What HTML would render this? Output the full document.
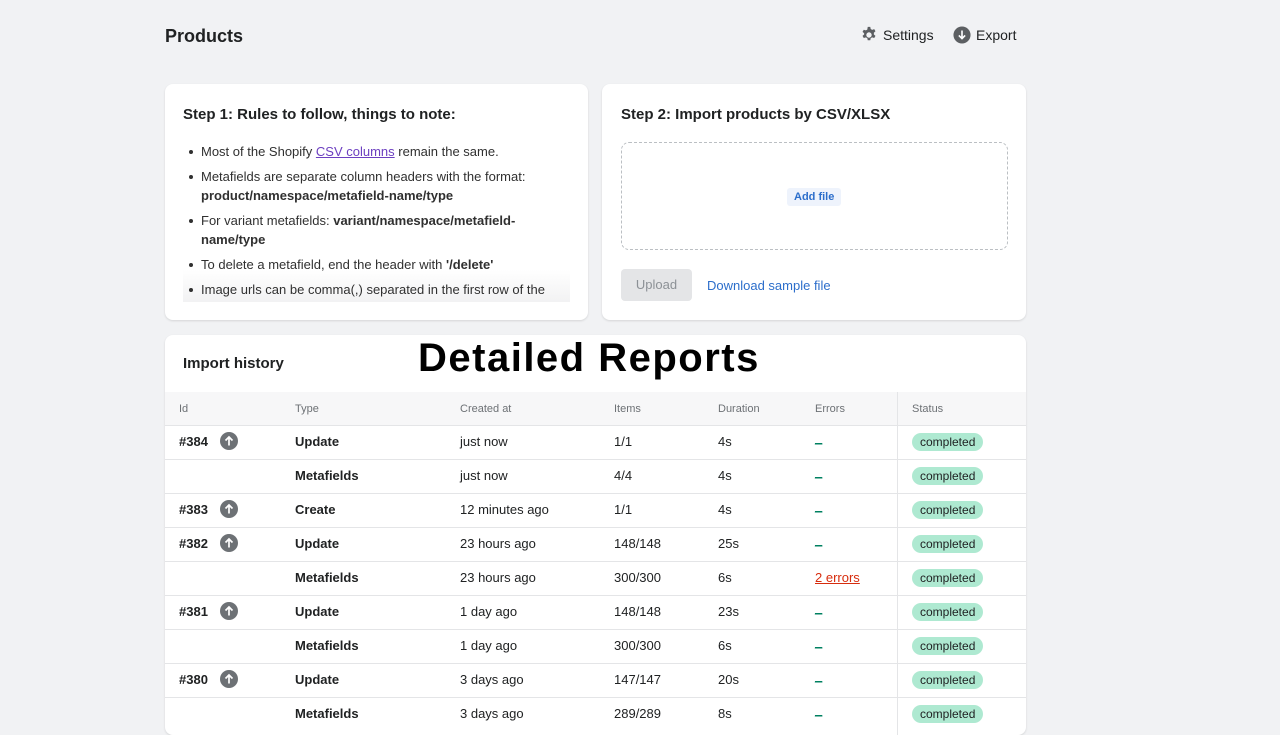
<!DOCTYPE html>
<html><head><meta charset="utf-8"><style>
*{box-sizing:border-box;margin:0;padding:0}
body{width:1280px;height:720px;overflow:hidden;background:#f1f2f4;font-family:"Liberation Sans",sans-serif;color:#202223;position:relative}
.abs{position:absolute}
.card{position:absolute;background:#fff;border-radius:8px;box-shadow:0 1px 2px rgba(0,0,0,.12)}
h2{font-size:15px;font-weight:bold;color:#202223}
ul{list-style:none}
li{position:relative;padding-left:18px;font-size:13px;line-height:19px;color:#303030;margin-bottom:6px}
li:before{content:"";position:absolute;left:6px;top:8px;width:4px;height:4px;border-radius:50%;background:#303030}
.row{position:absolute;left:0;width:861px;height:34px;border-top:1px solid #e4e5e7;font-size:13px}
.row span{position:absolute;top:8px}
.b{font-weight:bold}
.badge{background:#aee9d1;color:#202223;border-radius:10px;padding:2px 8px;font-size:12px;top:7px!important}
.dash{color:#008060;text-decoration:underline}
.up{display:inline-block;width:18px;height:18px;border-radius:50%;background:#6d7175;position:absolute;top:6px!important;left:55px}
</style></head><body>
<div class="abs" style="left:165px;top:26px;font-size:18px;font-weight:bold;color:#202223">Products</div>
<div class="abs" style="left:860px;top:26px;font-size:14px;color:#202223;display:flex;align-items:center;gap:5px">
<svg width="18" height="18" viewBox="0 0 20 20"><path fill="#5c5f62" d="M8.6 1h2.8l.5 2.4 1.6.9 2.3-.8 1.4 2.4-1.8 1.6v1.9l1.8 1.6-1.4 2.4-2.3-.8-1.6.9-.5 2.4H8.6l-.5-2.4-1.6-.9-2.3.8-1.4-2.4 1.8-1.6V8.1L2.8 6.5l1.4-2.4 2.3.8 1.6-.9zM10 7a3 3 0 100 6 3 3 0 000-6z"/></svg>Settings</div>
<div class="abs" style="left:953px;top:26px;font-size:14px;color:#202223;display:flex;align-items:center;gap:5px">
<svg width="18" height="18" viewBox="0 0 20 20"><circle cx="10" cy="10" r="9.5" fill="#5c5f62"/><path d="M10 5v9M6.5 10.5L10 14l3.5-3.5" stroke="#fff" stroke-width="1.8" fill="none"/></svg>Export</div>

<div class="card" style="left:165px;top:84px;width:423px;height:236px">
<h2 class="abs" style="left:18px;top:22px">Step 1: Rules to follow, things to note:</h2>
<div class="abs" style="left:18px;top:58px;width:387px;height:160px;overflow:hidden;background:linear-gradient(#fff 80%,#f2f2f3)">
<ul style="padding-top:0">
<li>Most of the Shopify <span style="color:#6c3fc0;text-decoration:underline">CSV columns</span> remain the same.</li>
<li>Metafields are separate column headers with the format: <b>product/namespace/metafield-name/type</b></li>
<li>For variant metafields: <b>variant/namespace/metafield-name/type</b></li>
<li>To delete a metafield, end the header with <b>'/delete'</b></li>
<li>Image urls can be comma(,) separated in the first row of the product</li>
</ul></div></div>

<div class="card" style="left:602px;top:84px;width:424px;height:236px">
<h2 class="abs" style="left:19px;top:22px">Step 2: Import products by CSV/XLSX</h2>
<div class="abs" style="left:19px;top:58px;width:387px;height:108px;border:1px dashed #bbbfc3;border-radius:8px"></div>
<div class="abs" style="left:185px;top:104px;background:#eef3fc;color:#2c6ecb;font-size:11px;font-weight:bold;padding:3px 7px;border-radius:3px">Add file</div>
<div class="abs" style="left:19px;top:185px;width:71px;height:32px;background:#e4e5e7;border-radius:4px;color:#8c9196;font-size:13px;text-align:center;line-height:32px">Upload</div>
<div class="abs" style="left:105px;top:194px;color:#2c6ecb;font-size:13px">Download sample file</div>
</div>

<div class="card" style="left:165px;top:335px;width:861px;height:400px;overflow:hidden">
<div class="abs" style="left:18px;top:20px;font-size:15px;font-weight:bold">Import history</div>
<div class="abs" style="left:253px;top:1px;font-size:40px;font-weight:bold;color:#000;letter-spacing:1.5px">Detailed Reports</div>
<div class="abs" style="left:0;top:57px;width:861px;height:34px;background:#f7f7f8;font-size:11px;color:#6d7175">
<span class="abs" style="left:14px;top:11px">Id</span><span class="abs" style="left:130px;top:11px">Type</span><span class="abs" style="left:295px;top:11px">Created at</span><span class="abs" style="left:449px;top:11px">Items</span><span class="abs" style="left:553px;top:11px">Duration</span><span class="abs" style="left:650px;top:11px">Errors</span><span class="abs" style="left:747px;top:11px">Status</span></div>
<div class="abs" style="left:732px;top:57px;width:1px;height:350px;background:#e4e5e7"></div>
<div id="rows"></div>
</div>
<script>
var d=[["#384","Update","just now","1/1","4s",""],["","Metafields","just now","4/4","4s",""],["#383","Create","12 minutes ago","1/1","4s",""],["#382","Update","23 hours ago","148/148","25s",""],["","Metafields","23 hours ago","300/300","6s","2 errors"],["#381","Update","1 day ago","148/148","23s",""],["","Metafields","1 day ago","300/300","6s",""],["#380","Update","3 days ago","147/147","20s",""],["","Metafields","3 days ago","289/289","8s",""]];
var h="";d.forEach(function(r,i){var t=90+i*34;h+='<div class="row" style="top:'+t+'px">'+(r[0]?'<span class="b" style="left:14px">'+r[0]+'</span><span class="up"><svg width="18" height="18" viewBox="0 0 18 18"><path d="M9 13.5V5M5.5 8.5L9 5l3.5 3.5" stroke="#fff" stroke-width="1.7" fill="none"/></svg></span>':'')+'<span class="b" style="left:130px">'+r[1]+'</span><span style="left:295px">'+r[2]+'</span><span style="left:449px">'+r[3]+'</span><span style="left:553px">'+r[4]+'</span>'+(r[5]?'<span style="left:650px;color:#d72c0d;text-decoration:underline">'+r[5]+'</span>':'<span class="dash" style="left:650px;top:4px">_</span>')+'<span class="badge abs" style="left:747px">completed</span></div>';});
document.getElementById("rows").innerHTML=h;
</script>
</body></html>
